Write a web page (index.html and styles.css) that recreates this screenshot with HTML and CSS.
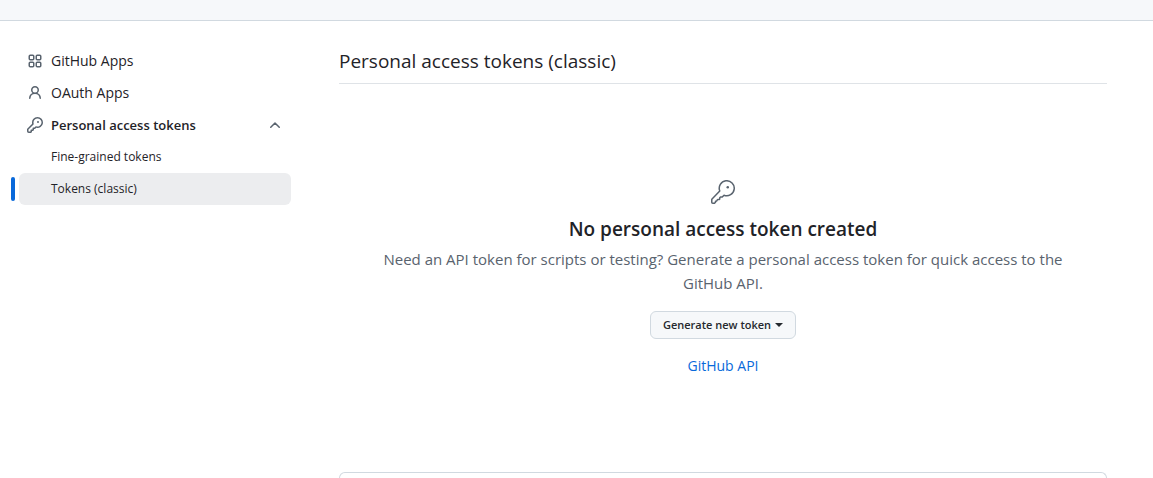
FILE: index.html
```html
<!DOCTYPE html>
<html lang="en">
<head>
<meta charset="utf-8">
<meta name="viewport" content="width=device-width, initial-scale=1">
<title>Personal access tokens (classic)</title>
<link rel="stylesheet" href="styles.css">
</head>
<body>
<header class="topbar"></header>
<div class="layout">
  <nav class="sidebar" aria-label="Developer settings">
    <ul class="nav-list">
      <li><a class="nav-item" href="#apps">
        <svg class="icon" viewBox="0 0 16 16" fill="none" stroke="currentColor" stroke-width="1.5" aria-hidden="true"><rect x="2.25" y="2.25" width="4.5" height="4.5" rx="1"/><rect x="9.25" y="2.25" width="4.5" height="4.5" rx="1"/><rect x="2.25" y="9.25" width="4.5" height="4.5" rx="1"/><rect x="9.25" y="9.25" width="4.5" height="4.5" rx="1"/></svg>
        <span>GitHub Apps</span></a></li>
      <li><a class="nav-item" href="#oauth">
        <svg class="icon" viewBox="0 0 16 16" fill="currentColor" aria-hidden="true"><path d="M10.561 8.073a6.005 6.005 0 0 1 3.432 5.142.75.75 0 1 1-1.498.07 4.5 4.5 0 0 0-8.99 0 .75.75 0 0 1-1.498-.07 6.004 6.004 0 0 1 3.431-5.142 3.999 3.999 0 1 1 5.123 0ZM10.5 5a2.5 2.5 0 1 0-5 0 2.5 2.5 0 0 0 5 0Z"/></svg>
        <span>OAuth Apps</span></a></li>
      <li>
        <button class="nav-item nav-toggle" type="button" aria-expanded="true">
          <svg class="icon" viewBox="0 0 16 16" fill="currentColor" aria-hidden="true"><path d="M10.5 0a5.499 5.499 0 1 1-1.288 10.848l-.932.932a.749.749 0 0 1-.53.22H7v.75a.749.749 0 0 1-.22.53l-.5.5a.749.749 0 0 1-.53.22H5v.75a.749.749 0 0 1-.22.53l-.5.5a.749.749 0 0 1-.53.22h-2A1.75 1.75 0 0 1 0 14.25v-2c0-.199.079-.389.22-.53l4.932-4.932A5.5 5.5 0 0 1 10.5 0Zm-4 5.5c-.001.431.069.86.205 1.269a.75.75 0 0 1-.181.768L1.5 12.56v1.69c0 .138.112.25.25.25h1.69l.06-.06v-1.19a.75.75 0 0 1 .75-.75h1.19l.06-.06v-1.19a.75.75 0 0 1 .75-.75h1.19l1.023-1.025a.75.75 0 0 1 .768-.18A4 4 0 1 0 6.5 5.5ZM11 6a1 1 0 1 1 0-2 1 1 0 0 1 0 2Z"/></svg>
          <span class="nav-label">Personal access tokens</span>
          <svg class="icon" viewBox="0 0 16 16" fill="none" stroke="currentColor" stroke-width="1.5" stroke-linecap="round" stroke-linejoin="round" aria-hidden="true"><path d="M3.75 10.25 8 6l4.25 4.25"/></svg>
        </button>
        <ul class="nav-list">
          <li><a class="nav-item nav-sub" href="#fine">Fine-grained tokens</a></li>
          <li class="current"><a class="nav-item nav-sub" href="#classic" aria-current="page">Tokens (classic)</a></li>
        </ul>
      </li>
    </ul>
  </nav>
  <main class="content">
    <h1 class="title">Personal access tokens (classic)</h1>
    <section class="blankslate">
      <svg class="icon-large" viewBox="0 0 24 24" fill="none" stroke="currentColor" stroke-width="1.5" stroke-linejoin="round" aria-hidden="true"><path d="M8.76 10.98A7.5 7.5 0 1 1 13.02 15.24L11.25 17H9.5L8.75 17.75V19L8.25 19.5H6.75L6 20.25V20.75L5.25 21.25H4.5V22.25L3.5 23.25H1.75A1 1 0 0 1 .75 22.25V19.75A1 1 0 0 1 1.04 19.04Z"/><circle cx="16.75" cy="7.25" r="1.25" fill="currentColor" stroke="none"/></svg>
      <h2 class="heading">No personal access token created</h2>
      <p class="message">Need an API token for scripts or testing? Generate a personal access token for quick access to the GitHub API.</p>
      <button class="generate" type="button" aria-haspopup="menu">Generate new token <span class="caret"></span></button>
      <a class="api-link" href="#api">GitHub API</a>
    </section>
    <section class="box"></section>
  </main>
</div>
</body>
</html>
```
FILE: styles.css
```css
* { box-sizing: border-box; }
body {
  display: flex;
  flex-direction: column;
  min-height: 100vh;
  margin: 0;
  background: #fff;
  color: #1f2328;
  font: 14px/20px "Open Sans", "Noto Sans", sans-serif;
}
.topbar {
  height: 21px;
  background: #f6f8fa;
  border-bottom: 1px solid #d1d9e0;
}
.layout {
  flex: 1;
  display: grid;
  grid-template-columns: 272px minmax(0, 1fr);
  gap: 48px;
  padding: 24px 46px 0 19px;
}
.nav-list { list-style: none; margin: 0; padding: 0; }
.nav-item {
  display: flex;
  align-items: center;
  gap: 8px;
  width: 100%;
  height: 32px;
  padding: 0 8px;
  border-radius: 6px;
  color: inherit;
  text-decoration: none;
}
.nav-toggle {
  border: 0;
  background: none;
  font: inherit;
  font-size: 13px;
  font-weight: 600;
  text-align: left;
}
.nav-label { flex: 1; }
.nav-sub { padding-left: 32px; font-size: 12px; }
.icon { width: 16px; height: 16px; flex: none; color: #59636e; }
.current { position: relative; }
.current .nav-sub { background: #ecedef; }
.current::before {
  content: "";
  position: absolute;
  left: -8px;
  top: 4px;
  width: 4px;
  height: 24px;
  border-radius: 6px;
  background: #0969da;
}
.content { display: flex; flex-direction: column; }
.title {
  margin: 0;
  padding: 0 0 6px;
  border-bottom: 1px solid #dfe3e7;
  font-size: 19px;
  font-weight: 400;
  line-height: 32px;
}
.blankslate {
  display: flex;
  flex-direction: column;
  align-items: center;
  padding: 96px 32px;
  text-align: center;
}
.icon-large { width: 24px; height: 24px; color: #59636e; }
.heading {
  margin: 10px 0 3px;
  font-size: 19px;
  font-weight: 600;
  line-height: 30px;
}
.message { margin: 0; color: #59636e; font-size: 15px; line-height: 24px; }
.generate {
  display: flex;
  align-items: center;
  gap: 4px;
  height: 28px;
  margin: 16px 0 17px;
  padding: 0 12px;
  border: 1px solid #d1d9e0;
  border-radius: 6px;
  background: #f6f8fa;
  color: #25292e;
  font: 600 11px/20px "Open Sans", "Noto Sans", sans-serif;
}
.caret { border: 4px solid transparent; border-top-color: currentColor; border-bottom: 0; }
.api-link { color: #0969da; text-decoration: none; }
.box {
  flex: 1;
  border: 1px solid #d1d9e0;
  border-bottom: 0;
  border-radius: 6px 6px 0 0;
}
```
